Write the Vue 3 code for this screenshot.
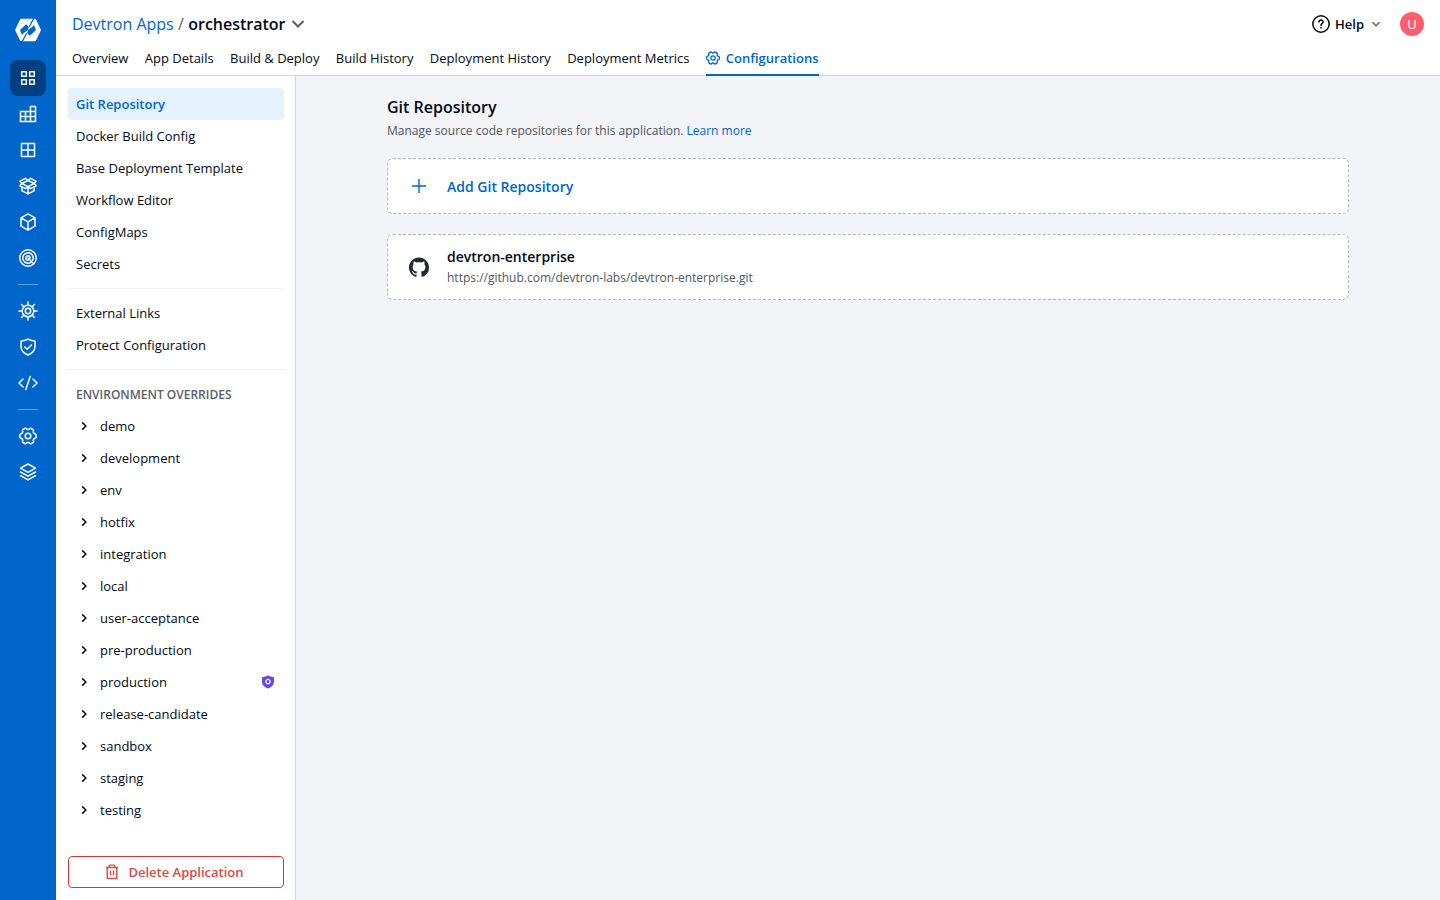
<script setup>
const tabs = ['Overview', 'App Details', 'Build & Deploy', 'Build History', 'Deployment History', 'Deployment Metrics']
const configLinks = ['Git Repository', 'Docker Build Config', 'Base Deployment Template', 'Workflow Editor', 'ConfigMaps', 'Secrets']
const otherLinks = ['External Links', 'Protect Configuration']
const environments = [
  { name: 'demo' }, { name: 'development' }, { name: 'env' }, { name: 'hotfix' },
  { name: 'integration' }, { name: 'local' }, { name: 'user-acceptance' },
  { name: 'pre-production' }, { name: 'production', isProtected: true },
  { name: 'release-candidate' }, { name: 'sandbox' }, { name: 'staging' }, { name: 'testing' },
]
const gear = 'M7.3 4.1 8.1 2.4Q8.4 1.9 9 1.9h2Q11.6 1.9 11.9 2.4l.8 1.7 1 .6 1.9-.2q.6 0 .9.5l1.1 1.8q.3.5 0 1L16.500 9.400v1.200l1.100 1.600q.3.5 0 1L16.500 15q-.3.5-.9.5l-1.900-.2-1 .6-.8 1.700q-.3.5-.9.5H9q-.6 0-.9-.5l-.8-1.700-1-.6-1.900.2q-.6 0-.9-.5l-1.100-1.800q-.3-.5 0-1l1.100-1.600V9.400L2.400 7.800q-.3-.5 0-1L3.500 5q.3-.5.9-.5l1.900.2z'
const spokes = [0, 45, 90, 135, 180, 225, 270, 315]
const railGroups = [
  ['apps', 'jobs', 'groups', 'chart', 'cube', 'target'],
  ['helm', 'shield', 'code'],
  ['gear', 'stack'],
]
</script>

<template>
  <div class="app">
    <nav class="rail">
      <a class="logo">
        <svg width="26" height="24" viewBox="0 0 26 24">
          <path fill="#fff" d="M6.4.8h13.3q.9 0 1.3.8l4.7 9.6q.4.8 0 1.6L21 22.4q-.4.8-1.3.8H6.4q-.9 0-1.3-.8L.4 12.8q-.4-.8 0-1.6L5.1 1.6q.4-.8 1.3-.8z" />
          <path class="logo-line" d="M19 0 14.300 8.700M11.700 15.300 7 24" />
          <path fill="#06c" d="m11.200 6.300 2.700 2.700-1.500 3.700-3.400 2-2 2.400-2-5.100zM14.800 17.700l-2.700-2.700 1.500-3.700 3.400-2 2-2.400 2 5.100z" />
        </svg>
      </a>
      <div v-for="(group, i) in railGroups" :key="i" class="rail-group">
        <a v-for="name in group" :key="name" class="rail-item" :class="{ active: name === 'apps' }">
          <svg class="line-icon" width="20" height="20" viewBox="0 0 20 20">
            <path v-if="name === 'apps'" d="M3.700 3.700h4.600v4.600H3.700zM11.700 3.700h4.600v4.600h-4.600zM3.700 11.700h4.600v4.600H3.700zM11.700 11.700h4.600v4.600h-4.600z" />
            <path v-else-if="name === 'jobs'" d="M2.500 7.500h10v10h-10zM2.500 12.500h15v5H2.500zM7.500 7.500v10M12.500 17.500v-15h5v15M12.500 7.500h5" />
            <path v-else-if="name === 'groups'" d="M3.500 3.500h13v13h-13zM10 3.500v13M3.500 10h13" />
            <path v-else-if="name === 'chart'" d="m10 4.500-6.200 3L10 10.600l6.200-3.100zM3.800 7.500 1.800 5.300l5.600-3L10 4.500l2.600-2.200 5.600 3-2 2.200 2 2.400-5.600 2.800-2.600-2.100-2.600 2.100-5.600-2.800zM3.800 11.700v3l6.200 3.200 6.200-3.200v-3M10 10.600v7.300" />
            <path v-else-if="name === 'cube'" d="m10 1.900 7 3.900v8.400l-7 3.900-7-3.900V5.800zM3 5.800l7 4 7-4M10 9.800v8.300" />
            <template v-else-if="name === 'target'">
              <circle cx="10" cy="10" r="8.200" />
              <path d="M13.200 14.100A5.200 5.200 0 1 1 15.200 10q0 1.200-.5 2.200M10 12.200A2.200 2.200 0 1 1 12.200 10M10 10l5.800 5.800" />
            </template>
            <template v-else-if="name === 'helm'">
              <circle cx="10" cy="10" r="5.800" />
              <circle cx="10" cy="10" r="2.700" />
              <path v-for="a in spokes" :key="a" d="M10 4V.9" :transform="`rotate(${a} 10 10)`" />
            </template>
            <path v-else-if="name === 'shield'" d="M10 2.100Q13.500 4 17 4v5.200c0 4.500-3 7.200-7 8.800-4-1.600-7-4.300-7-8.800V4q3.500 0 7-1.900zM6.800 10l2.400 2.300 4.200-4.400" />
            <path v-else-if="name === 'code'" d="M5 6 1 10l4 4M15 6l4 4-4 4M12.200 3.400 7.800 16.600" />
            <template v-else-if="name === 'gear'">
              <path :d="gear" transform="rotate(30 10 10)" />
              <circle cx="10" cy="10" r="2.800" />
            </template>
            <path v-else d="m10 2 7.500 4.200L10 10.400 2.500 6.200zM2.500 10l7.500 4.200 7.500-4.200M2.500 13.700l7.500 4.200 7.500-4.200" />
          </svg>
        </a>
      </div>
    </nav>

    <div class="main">
      <header class="header">
        <div class="title-row">
          <div class="crumbs">
            <a class="crumb-link">Devtron Apps</a><span class="slash">/</span><span class="crumb-current">orchestrator</span>
            <svg class="crumb-chevron" width="14" height="10" viewBox="0 0 14 10"><path d="m1.500 2 5.500 5.500L12.500 2" /></svg>
          </div>
          <div class="account">
            <svg class="help-icon" width="20" height="20" viewBox="0 0 20 20">
              <circle cx="10" cy="10" r="8.200" />
              <path d="M7.900 8.100C7.900 5.400 12.200 5.500 12.100 8.100c0 1.600-2.100 1.600-2.100 3.300" />
              <circle class="dot" cx="10" cy="13.800" r=".9" />
            </svg>
            <span class="help">Help</span>
            <svg class="help-chevron" width="10" height="8" viewBox="0 0 10 8"><path d="m1.400 2.200 3.600 3.600 3.600-3.600" /></svg>
            <span class="avatar">U</span>
          </div>
        </div>
        <div class="tabs">
          <a v-for="tab in tabs" :key="tab" class="tab">{{ tab }}</a>
          <a class="tab selected">
            <svg class="line-icon" width="14" height="14" viewBox="1 1 18 18">
              <path :d="gear" transform="rotate(30 10 10)" />
              <circle cx="10" cy="10" r="2.800" />
            </svg>
            <span>Configurations</span>
          </a>
        </div>
      </header>

      <div class="body">
        <aside class="sidebar">
          <div class="links">
            <a v-for="(link, i) in configLinks" :key="link" class="link" :class="{ current: i === 0 }">{{ link }}</a>
            <hr class="divider" />
            <a v-for="link in otherLinks" :key="link" class="link">{{ link }}</a>
            <hr class="divider" />
            <div class="heading">ENVIRONMENT OVERRIDES</div>
            <a v-for="env in environments" :key="env.name" class="link env">
              <svg class="env-chevron" width="16" height="16" viewBox="0 0 16 16"><path d="m6.200 4.400 3.600 3.600-3.600 3.600" /></svg>
              <span>{{ env.name }}</span>
              <svg v-if="env.isProtected" class="protected" width="12" height="14" viewBox="0 0 12 14">
                <path fill="#664bdd" d="M6 .5Q8.500 1.800 11 1.900q1 0 1 1v3.700c0 3.500-2.400 5.700-6 7-3.600-1.300-6-3.500-6-7V2.900q0-1 1-1Q3.500 1.800 6 .5z" />
                <circle cx="6" cy="6.600" r="2.100" fill="none" stroke="#fff" stroke-width="1.100" />
                <path d="M6 3.700v1M6 8.500v1M3.100 6.600h1M7.900 6.600h1" stroke="#fff" stroke-width=".8" />
              </svg>
            </a>
          </div>
          <button class="delete">
            <svg width="16" height="16" viewBox="0 0 16 16"><path d="M1.800 3.500h12.400M3.200 3.500v10.200q0 .8.800.8h8q.8 0 .8-.8V3.500M5.200 3.500V2q0-.9.9-.9h3.800q.9 0 .9.900v1.500M6.500 6.600v4.600M9.500 6.600v4.600" /></svg>
            <span>Delete Application</span>
          </button>
        </aside>

        <main class="content">
          <h1>Git Repository</h1>
          <p class="intro">Manage source code repositories for this application. <a>Learn more</a></p>
          <section class="card add">
            <svg class="plus" width="20" height="20" viewBox="0 0 20 20"><path d="M10 3v14M3 10h14" /></svg>
            <span>Add Git Repository</span>
          </section>
          <section class="card repo">
            <svg width="20" height="20" viewBox="0 -.3 16 16"><path fill="#24292e" d="M8 0C3.580 0 0 3.580 0 8c0 3.540 2.290 6.530 5.470 7.590.4.070.55-.17.55-.38 0-.19-.01-.82-.01-1.490-2.010.37-2.530-.49-2.690-.94-.09-.23-.48-.94-.82-1.130-.28-.15-.68-.52-.01-.53.63-.01 1.080.58 1.230.82.72 1.210 1.870.87 2.330.66.07-.52.28-.87.51-1.070-1.780-.2-3.640-.89-3.640-3.950 0-.87.31-1.590.82-2.150-.08-.2-.36-1.020.08-2.120 0 0 .67-.21 2.200.82.64-.18 1.320-.27 2-.27s1.360.09 2 .27c1.530-1.040 2.200-.82 2.200-.82.44 1.100.16 1.920.08 2.120.51.56.82 1.270.82 2.150 0 3.070-1.870 3.750-3.650 3.950.29.25.54.73.54 1.480 0 1.070-.01 1.930-.01 2.200 0 .21.15.46.55.38A8.010 8.010 0 0 0 16 8c0-4.420-3.580-8-8-8z" /></svg>
            <div>
              <div class="repo-name">devtron-enterprise</div>
              <div class="repo-url">https://github.com/devtron-labs/devtron-enterprise.git</div>
            </div>
          </section>
        </main>
      </div>
    </div>
  </div>
</template>

<style>
body { margin: 0; overflow: hidden; }
</style>

<style scoped>
* { box-sizing: border-box; }
.app { display: flex; height: 100vh; font: 400 13px/20px "Open Sans", sans-serif; color: #000a14; background: #fff; }
svg { display: block; flex: none; fill: none; overflow: visible; }
.line-icon { fill: none; stroke: currentColor; stroke-width: 1.5; stroke-linecap: round; stroke-linejoin: round; }
.rail { width: 56px; flex: none; background: #0066cc; color: #fff; display: flex; flex-direction: column; align-items: center; }
.logo { height: 60px; display: flex; align-items: center; }
.logo-line { stroke: #0066cc; stroke-width: 1.3; }
.rail-item { width: 36px; height: 36px; display: flex; align-items: center; justify-content: center; border-radius: 8px; }
.rail-item.active { background: #004080; }
.rail-group + .rail-group { margin-top: 8px; padding-top: 8px; position: relative; border-top: 1px solid transparent; }
.rail-group + .rail-group::before { content: ""; position: absolute; top: -1px; left: 8px; width: 20px; height: 1px; background: #5c9fe0; }
.main { flex: 1; min-width: 0; display: flex; flex-direction: column; }
.header { height: 76px; flex: none; border-bottom: 1px solid #d0d4d9; padding: 0 16px; }
.title-row { height: 48px; display: flex; justify-content: space-between; align-items: center; }
.crumbs, .account { display: flex; align-items: center; }
.crumbs { font-size: 16px; line-height: 24px; }
.crumb-link { color: #0066cc; }
.slash { margin: 0 4.3px; color: #596168; }
.crumb-current { font-weight: 600; }
.crumb-chevron { margin-left: 5px; stroke: #596168; stroke-width: 2; }
.help-icon { stroke: #000a14; stroke-width: 1.5; stroke-linecap: round; }
.dot { fill: #000a14; stroke: none; }
.help { margin-left: 4px; font-size: 13px; font-weight: 600; }
.help-chevron { margin-left: 7px; stroke: #596168; stroke-width: 1.3; }
.avatar { width: 24px; height: 24px; margin-left: 19px; border-radius: 50%; background: #ff5f6d; color: #fff; font-size: 13px; line-height: 24px; text-align: center; }
.tabs { display: flex; gap: 16.4px; height: 28px; }
.tab { display: flex; height: 28px; line-height: 20px; white-space: nowrap; }
.tab.selected { color: #0066cc; font-weight: 600; gap: 6px; border-bottom: 2px solid #0066cc; }
.tab.selected svg { margin-top: 3px; stroke-width: 1.7; }
.body { flex: 1; display: flex; min-height: 0; }
.sidebar { width: 240px; flex: none; border-right: 1px solid #d0d4d9; padding: 12px 11px 12px 12px; display: flex; flex-direction: column; justify-content: space-between; }
.link, .heading { height: 32px; padding: 0 8px; display: flex; align-items: center; border-radius: 4px; }
.link.current { background: #e5f2ff; color: #0066cc; font-weight: 600; }
.divider { height: 1px; border: 0; margin: 8px 0; background: #edf1f5; }
.heading { padding-top: 2px; font-size: 12px; font-weight: 600; color: #596168; }
.env { gap: 8px; }
.env-chevron { stroke: #000a14; stroke-width: 1.5; }
.protected { margin: 0 2px 0 auto; }
.delete { height: 32px; display: flex; align-items: center; justify-content: center; gap: 8px; padding: 0 4px 0 0; border: 1px solid #d4383c; border-radius: 4px; background: #fff; color: #d84a4d; font: 600 13px/20px "Open Sans", sans-serif; }
.delete svg { stroke: #d84a4d; stroke-width: 1.4; }
.content { flex: 1; background: #f2f4f7; padding: 19px 91px 0; }
h1 { margin: 0; font-size: 16px; line-height: 24px; font-weight: 600; }
.intro { margin: 2px 0 17px; font-size: 12px; line-height: 20px; color: #50575e; }
.intro a { color: #0066cc; }
.card { display: flex; align-items: center; gap: 18px; padding: 0 21px; background: #fff; border: 1px dashed #b1b7bc; border-radius: 6px; }
.add { height: 56px; margin-bottom: 20px; font-size: 14px; font-weight: 600; color: #0066cc; }
.add span { padding-top: 2px; }
.plus { stroke: #0066cc; stroke-width: 1.4; }
.repo { height: 66px; }
.repo-name { font-size: 14px; line-height: 22px; font-weight: 600; }
.repo-url { font-size: 12px; line-height: 20px; color: #50575e; }
</style>
